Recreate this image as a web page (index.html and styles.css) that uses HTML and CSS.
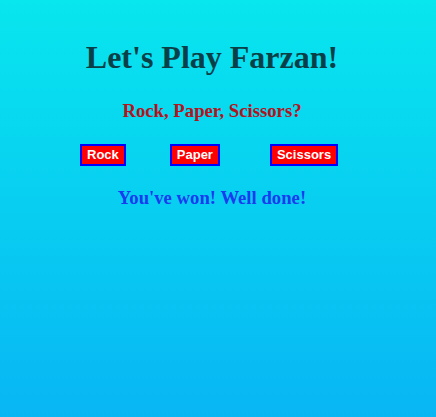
FILE: index.html
```html
<!DOCTYPE html>
<html>
<head>
<meta charset="utf-8">
<link rel="stylesheet" href="styles.css">
</head>
<body>
<main class="game">
  <h1 class="title">Let's Play Farzan!</h1>
  <h2 class="question">Rock, Paper, Scissors?</h2>
  <div class="choices">
    <button class="choice">Rock</button>
    <button class="choice choice-paper">Paper</button>
    <button class="choice choice-scissors">Scissors</button>
  </div>
  <h2 class="result">You've won! Well done!</h2>
</main>
</body>
</html>
```
FILE: styles.css
```css
html, body {
  margin: 0;
  height: 100%;
}
body {
  background: linear-gradient(to bottom, #08e6ee, #08b6f4);
  font-family: "Liberation Serif", "Times New Roman", serif;
}
.game {
  width: 424px;
  padding-top: 39px;
  text-align: center;
}
.title {
  margin: 0;
  font-size: 32px;
  line-height: 37px;
  color: #0a3f48;
}
.question {
  margin: 24px 0 0;
  font-size: 18.72px;
  line-height: 22px;
  color: #b5121b;
}
.choices {
  display: flex;
  padding-left: 80px;
  margin-top: 22px;
}
.choice {
  font-family: "Liberation Sans", Arial, sans-serif;
  font-size: 13px;
  font-weight: bold;
  color: #fff;
  background: #ff0000;
  border: 2px solid #0000ff;
  padding: 1px 5px;
  height: 22px;
  line-height: 16px;
}
.choice-paper { margin-left: 44px; }
.choice-scissors { margin-left: 50px; }
.result {
  margin: 21px 0 0;
  font-size: 18.72px;
  line-height: 22px;
  color: #1a3cf0;
}
```
